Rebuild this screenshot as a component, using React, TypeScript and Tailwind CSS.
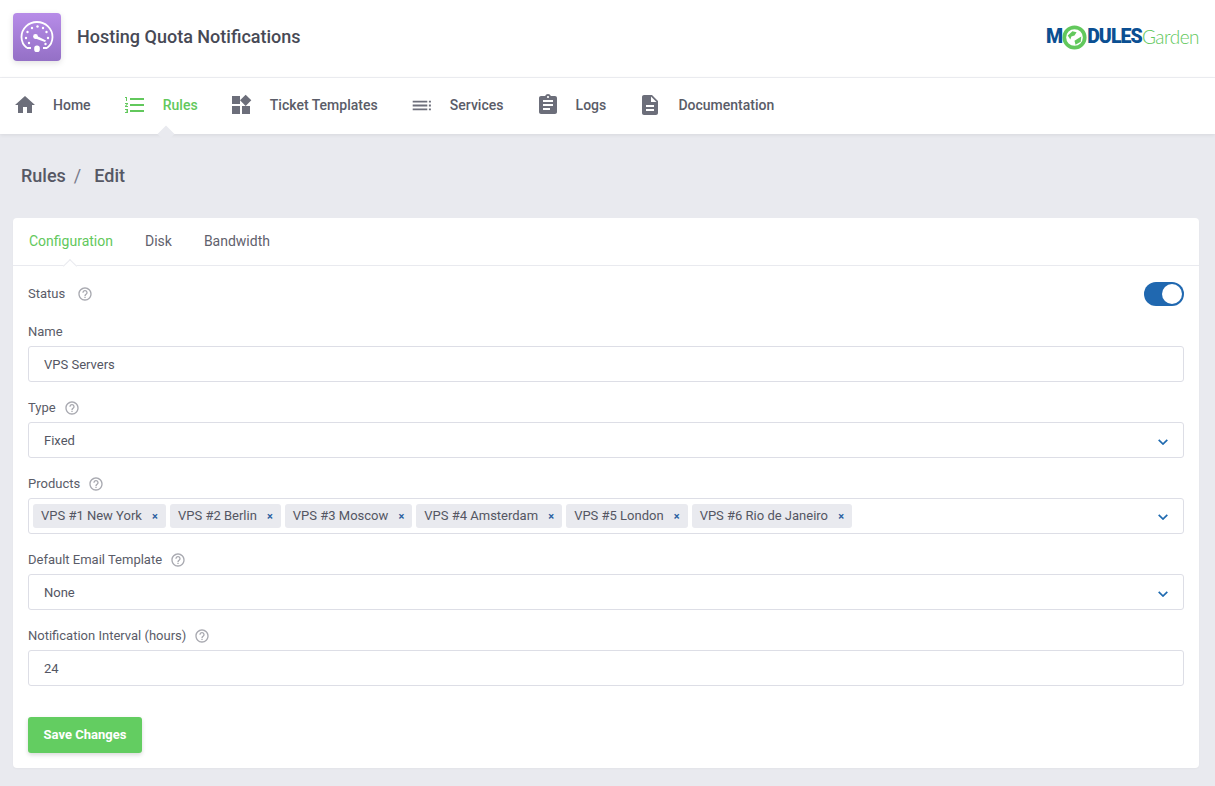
import React from "react";

const I = ({ d, c = "#6c6e7a", s = 24 }: { d: string; c?: string; s?: number }) => (
  <svg width={s} height={s} viewBox="0 0 24 24" fill={c} className="shrink-0"><path d={d} /></svg>
);

const help = "M11 18h2v-2h-2v2zm1-16C6.48 2 2 6.48 2 12s4.48 10 10 10 10-4.48 10-10S17.52 2 12 2zm0 18c-4.41 0-8-3.59-8-8s3.59-8 8-8 8 3.59 8 8-3.59 8-8 8zm0-14c-2.21 0-4 1.79-4 4h2c0-1.1.9-2 2-2s2 .9 2 2c0 2-3 1.75-3 5h2c0-2.25 3-2.5 3-5 0-2.21-1.79-4-4-4z";

const nav = [
  { t: "Home", d: "M10 20v-6h4v6h5v-8h3L12 3 2 12h3v8z" },
  { t: "Rules", a: true, d: "M2 17h2v.5H3v1h1v.5H2v1h3v-4H2zm1-9h1V4H2v1h1v3zm-1 3h1.8L2 13.1v.9h3v-1H3.2L5 10.9V10H2v1zm5-6v2h14V5H7zm0 14h14v-2H7v2zm0-6h14v-2H7v2z" },
  { t: "Ticket Templates", d: "M12 13v8h8v-8h-8zM2 21h8v-8H2v8zM2 3v8h8V3H2zm13.66-1.31L10 7.34 15.66 13l5.66-5.66-5.66-5.65z" },
  { t: "Services", d: "M2.7 7.7h14.6v1.8H2.7zM2.7 11.6h14.6v1.8H2.7zM2.7 15.5h14.6v1.8H2.7zM18.9 7.7h2v1.8h-2zM18.9 11.6h2v1.8h-2zM18.9 15.5h2v1.8h-2z" },
  { t: "Logs", d: "M19 3h-4.18C14.4 1.84 13.3 1 12 1c-1.3 0-2.4.84-2.82 2H5c-1.1 0-2 .9-2 2v14c0 1.1.9 2 2 2h14c1.1 0 2-.9 2-2V5c0-1.1-.9-2-2-2zm-7 0c.55 0 1 .45 1 1s-.45 1-1 1-1-.45-1-1 .45-1 1-1zm2 14H7v-2h7v2zm3-4H7v-2h10v2zm0-4H7V7h10v2z" },
  { t: "Documentation", d: "M14 2H6c-1.1 0-1.99.9-1.99 2L4 20c0 1.1.89 2 1.99 2H18c1.1 0 2-.9 2-2V8l-6-6zm2 16H8v-2h8v2zm0-4H8v-2h8v2zm-3-5V3.5L18.5 9H13z" },
];

const tags = ["VPS #1 New York", "VPS #2 Berlin", "VPS #3 Moscow", "VPS #4 Amsterdam", "VPS #5 London", "VPS #6 Rio de Janeiro"];

const Chevron = () => (
  <svg width="10" height="6" viewBox="0 0 10 6" fill="none" stroke="#1f6ab0" strokeWidth="1.7" className="shrink-0 mt-[2px]"><path d="M0.7 0.8 5 5 9.3 0.8" /></svg>
);

const Label = ({ t, h = false }: { t: string; h?: boolean }) => (
  <div className="h-5 mb-[5px] pt-[2px] flex items-center text-[#5a5c68]">
    <span>{t}</span>
    {h && <span className="ml-[8px]"><I d={help} c="#a8a9b0" s={16} /></span>}
  </div>
);

const Box = ({ children, sel = false }: { children: React.ReactNode; sel?: boolean }) => (
  <div className="h-9 mb-[15px] pt-[2px] flex items-center justify-between border border-[#dddee6] rounded-[3px] bg-white pl-[15px] pr-[15px] text-[#545663]">
    <span>{children}</span>
    {sel && <Chevron />}
  </div>
);

export default function App() {
  return (
    <div className="w-[1215px] h-[786px] overflow-hidden bg-[#e9eaef] font-['Roboto',sans-serif] text-[13px]">
      <header className="h-[78px] bg-white border-b border-[#eeeff3] flex items-center justify-between pl-[13px] pr-[16px] pb-[3px]">
        <div className="flex items-center gap-4">
          <div className="w-12 h-12 rounded-[4px] bg-gradient-to-b from-[#b78ce8] to-[#9470c6] shadow-[0_2px_6px_rgba(0,0,0,0.12)] flex items-center justify-center">
            <svg width="34" height="32" viewBox="0 0 34 32" fill="none" stroke="#fff">
              <path d="M7 27 H11 M23 27 H27 M7 27 C3 24 1.5 20 1.5 16 A15.5 15 0 0 1 32.5 16 C32.5 20 31 24 27 27" strokeWidth="1.8" />
              <g fill="#fff" stroke="none">
                <circle cx="6" cy="17" r="1.2" /><circle cx="7.5" cy="11" r="1.2" /><circle cx="12" cy="7" r="1.2" /><circle cx="17.5" cy="5.5" r="1.2" /><circle cx="23" cy="7" r="1.2" /><circle cx="26.5" cy="11" r="1.2" /><circle cx="9" cy="22" r="1.2" /><circle cx="28" cy="17" r="1.2" /><circle cx="25.5" cy="23" r="1.2" />
                <circle cx="15.5" cy="15.5" r="2.4" />
                <path d="M15 14 L26 19.5 L25 21 L14 17z" />
                <rect x="14.2" y="24.5" width="5.6" height="6.5" rx="2.6" />
              </g>
            </svg>
          </div>
          <div className="text-[18px] font-medium text-[#474955] mb-[2px]">Hosting Quota Notifications</div>
        </div>
        <div className="flex items-center h-7 text-[#0b4f92] font-black text-[19.5px] tracking-[-0.9px]">
          <span>M</span>
          <svg width="25" height="25" viewBox="0 0 24 24" className="shrink-0">
            <circle cx="12" cy="12" r="9.8" fill="#fff" stroke="#62c85c" strokeWidth="3.6" />
            <path d="M5.5 10 L10 6 L14 7 L12 10 L9 11 L8 14z M12 15 L18.5 11 L18 16 L13 19z" fill="#62c85c" />
          </svg>
          <span>DULES</span>
          <span className="font-['Lato',sans-serif] font-light text-[#62c85c] text-[19px] tracking-[-0.5px]">Garden</span>
        </div>
      </header>

      <nav className="relative h-14 bg-white shadow-[0_1px_4px_rgba(0,0,0,0.08)] flex items-center pl-[13px] pb-[2px] gap-[32.2px] text-[14px] font-medium text-[#5a5c68]">
        {nav.map((n) => (
          <div key={n.t} className={"flex items-center gap-4 " + (n.a ? "text-[#62c85c]" : "")}>
            <I d={n.d} c={n.a ? "#62c85c" : "#6c6e7a"} />
            <span>{n.t}</span>
          </div>
        ))}
        <div className="absolute left-[160px] bottom-[-6px] w-[12px] h-[12px] rotate-45 bg-[#e9eaef]" />
      </nav>

      <div className="h-[84px] flex items-center pl-[21px] pb-[2px] text-[18px] font-medium text-[#565864]">
        <span>Rules</span>
        <span className="ml-[8px] mr-[13px] font-normal text-[#77798a]">/</span>
        <span>Edit</span>
      </div>

      <main className="ml-[13px] mr-[16px] h-[550px] bg-white rounded-[4px] shadow-[0_1px_2px_rgba(0,0,0,0.03)]">
        <div className="relative h-[48px] border-b border-[#e9eaef] flex items-center pl-4 gap-8 text-[14px] text-[#5f616d]">
          <span className="text-[#62c85c]">Configuration</span>
          <span>Disk</span>
          <span>Bandwidth</span>
          <div className="absolute left-[52px] bottom-[-6px] w-[10px] h-[10px] rotate-45 bg-white border-l border-t border-[#e9eaef]" />
        </div>
        <div className="px-[15px] pt-4">
          <div className="h-6 mb-[15px] flex items-center justify-between text-[#5a5c68]">
            <div className="flex items-center">
              <span>Status</span>
              <span className="ml-3"><I d={help} c="#a8a9b0" s={16} /></span>
            </div>
            <div className="w-10 h-6 rounded-full bg-[#2068b0] flex items-center justify-end pr-[2px]">
              <div className="w-5 h-5 rounded-full bg-white" />
            </div>
          </div>
          <Label t="Name" />
          <Box>VPS Servers</Box>
          <Label t="Type" h />
          <Box sel>Fixed</Box>
          <Label t="Products" h />
          <div className="h-9 mb-[15px] flex items-center justify-between border border-[#dddee6] rounded-[3px] pl-[4px] pr-[15px] text-[#545663]">
            <div className="flex items-center gap-[4px]">
              {tags.map((t) => (
                <div key={t} className="h-6 flex items-center bg-[#e9eaef] rounded-[3px] pl-2 pr-2">
                  <span>{t}</span>
                  <span className="ml-[10.2px] text-[11px] font-bold leading-none text-[#2a5fa0]">×</span>
                </div>
              ))}
            </div>
            <Chevron />
          </div>
          <Label t="Default Email Template" h />
          <Box sel>None</Box>
          <Label t="Notification Interval (hours)" h />
          <Box>24</Box>
          <button className="mt-4 h-9 w-[114px] rounded-[3px] bg-[#63cd61] text-white font-bold text-[13px] shadow-[0_2px_4px_rgba(0,0,0,0.15)]">Save Changes</button>
        </div>
      </main>
    </div>
  );
}
